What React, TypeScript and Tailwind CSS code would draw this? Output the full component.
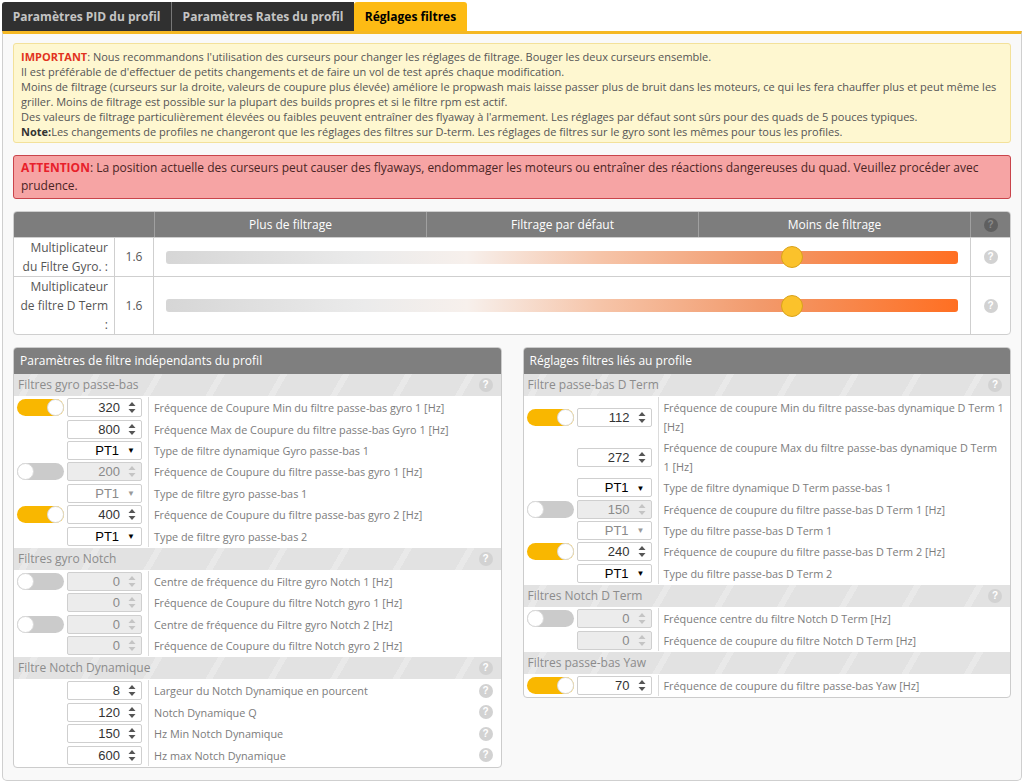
import React from 'react';

type Row = {
  toggle?: boolean;
  kind: 'num' | 'select';
  value: string;
  disabled?: boolean;
  label: string;
  help?: boolean;
};

type Group = { title: string; help?: boolean; rows: Row[] };

const leftGroups: Group[] = [
  {
    title: 'Filtres gyro passe-bas',
    help: true,
    rows: [
      { toggle: true, kind: 'num', value: '320', label: 'Fréquence de Coupure Min du filtre passe-bas gyro 1 [Hz]' },
      { kind: 'num', value: '800', label: 'Fréquence Max de Coupure du filtre passe-bas Gyro 1 [Hz]' },
      { kind: 'select', value: 'PT1', label: 'Type de filtre dynamique Gyro passe-bas 1' },
      { toggle: false, kind: 'num', value: '200', disabled: true, label: 'Fréquence de Coupure du filtre passe-bas gyro 1 [Hz]' },
      { kind: 'select', value: 'PT1', disabled: true, label: 'Type de filtre gyro passe-bas 1' },
      { toggle: true, kind: 'num', value: '400', label: 'Fréquence de Coupure du filtre passe-bas gyro 2 [Hz]' },
      { kind: 'select', value: 'PT1', label: 'Type de filtre gyro passe-bas 2' },
    ],
  },
  {
    title: 'Filtres gyro Notch',
    help: true,
    rows: [
      { toggle: false, kind: 'num', value: '0', disabled: true, label: 'Centre de fréquence du Filtre gyro Notch 1 [Hz]' },
      { kind: 'num', value: '0', disabled: true, label: 'Fréquence de Coupure du filtre Notch gyro 1 [Hz]' },
      { toggle: false, kind: 'num', value: '0', disabled: true, label: 'Centre de fréquence du Filtre gyro Notch 2 [Hz]' },
      { kind: 'num', value: '0', disabled: true, label: 'Fréquence de Coupure du filtre Notch gyro 2 [Hz]' },
    ],
  },
  {
    title: 'Filtre Notch Dynamique',
    help: true,
    rows: [
      { kind: 'num', value: '8', label: 'Largeur du Notch Dynamique en pourcent', help: true },
      { kind: 'num', value: '120', label: 'Notch Dynamique Q', help: true },
      { kind: 'num', value: '150', label: 'Hz Min Notch Dynamique', help: true },
      { kind: 'num', value: '600', label: 'Hz max Notch Dynamique', help: true },
    ],
  },
];

const rightGroups: Group[] = [
  {
    title: 'Filtre passe-bas D Term',
    help: true,
    rows: [
      { toggle: true, kind: 'num', value: '112', label: 'Fréquence de coupure Min du filtre passe-bas dynamique D Term 1 [Hz]' },
      { kind: 'num', value: '272', label: 'Fréquence de coupure Max du filtre passe-bas dynamique D Term 1 [Hz]' },
      { kind: 'select', value: 'PT1', label: 'Type de filtre dynamique D Term passe-bas 1' },
      { toggle: false, kind: 'num', value: '150', disabled: true, label: 'Fréquence de coupure du filtre passe-bas D Term 1 [Hz]' },
      { kind: 'select', value: 'PT1', disabled: true, label: 'Type du filtre passe-bas D Term 1' },
      { toggle: true, kind: 'num', value: '240', label: 'Fréquence de coupure du filtre passe-bas D Term 2 [Hz]' },
      { kind: 'select', value: 'PT1', label: 'Type du filtre passe-bas D Term 2' },
    ],
  },
  {
    title: 'Filtres Notch D Term',
    help: true,
    rows: [
      { toggle: false, kind: 'num', value: '0', disabled: true, label: 'Fréquence centre du filtre Notch D Term [Hz]' },
      { kind: 'num', value: '0', disabled: true, label: 'Fréquence de coupure du filtre Notch D Term [Hz]' },
    ],
  },
  {
    title: 'Filtres passe-bas Yaw',
    rows: [{ toggle: true, kind: 'num', value: '70', label: 'Fréquence de coupure du filtre passe-bas Yaw [Hz]' }],
  },
];

function Help({ dark }: { dark?: boolean }) {
  return (
    <span
      className={`flex h-[14px] w-[14px] shrink-0 items-center justify-center rounded-full font-['Liberation_Sans'] text-[10px] font-bold leading-none ${
        dark ? 'bg-[#5f5f5f] text-[#8a8a8a]' : 'bg-[#d2d2d2] text-white'
      }`}
    >
      ?
    </span>
  );
}

function Toggle({ on }: { on: boolean }) {
  return (
    <div
      className={`flex h-[17px] w-[47px] rounded-full ${
        on ? 'justify-end bg-[#f9b700]' : 'justify-start bg-[#cbcbcb]'
      }`}
    >
      <span className="h-[17px] w-[17px] rounded-full border border-[#d8d8d8] bg-white" />
    </div>
  );
}

function Spin({ disabled }: { disabled?: boolean }) {
  const c = disabled ? '#c4c4c4' : '#555';
  return (
    <svg width="8" height="13" viewBox="0 0 8 13" className="ml-[8px] shrink-0">
      <path d="M4 1 L7.5 5 H0.5 Z" fill={c} />
      <path d="M4 12 L7.5 8 H0.5 Z" fill={c} />
    </svg>
  );
}

function Field({ row }: { row: Row }) {
  const text = row.disabled ? 'text-[#8a8a8a]' : row.kind === 'select' ? 'text-black' : 'text-[#333]';
  return (
    <div
      className={`flex h-[19px] w-[75px] items-center justify-end rounded-[2px] border border-[#cfcfcf] pr-[5px] ${
        row.disabled && row.kind === 'num' ? 'bg-[#ececec]' : 'bg-white'
      }`}
    >
      <span className={`font-['Liberation_Sans'] text-[13px] leading-none ${text}`}>{row.value}</span>
      {row.kind === 'num' ? (
        <Spin disabled={row.disabled} />
      ) : (
        <span className={`ml-[8px] mr-[1px] text-[8px] leading-none ${row.disabled ? 'text-[#999]' : 'text-black'}`}>▼</span>
      )}
    </div>
  );
}

function Panel({ title, groups }: { title: string; groups: Group[] }) {
  return (
    <div className="overflow-hidden rounded-[4px] border border-[#cccccc] bg-white">
      <div className="flex h-[26px] items-center bg-[#7f7f7f] pl-[6px] text-[12px] text-white">{title}</div>
      {groups.map((g) => (
        <div key={g.title}>
          <div className="flex h-[22px] items-center justify-between bg-[#e3e3e3] bg-[repeating-linear-gradient(-60deg,#e2e2e2_0px,#e2e2e2_34px,#e9e9e9_34px,#e9e9e9_40px,#e2e2e2_40px,#e2e2e2_54px)] pl-[4px] pr-[8px] text-[12px] text-[#8c8c8c]">
            <span>{g.title}</span>
            {g.help && <Help />}
          </div>
          <div className="py-px">
            {g.rows.map((r, i) => (
              <div key={i} className="flex min-h-[21.4px]">
                <div className="flex w-[135px] shrink-0 items-center justify-end gap-[3px] border-r border-[#dcdcdc] pr-[6px]">
                  {r.toggle !== undefined && <Toggle on={r.toggle} />}
                  <Field row={r} />
                </div>
                <div className={`flex flex-1 items-center pl-[5px] ${r.help ? 'pr-[8px]' : 'pr-[5px]'}`}>
                  <span className="flex-1 py-px text-[10.85px] leading-[19px] text-[#7c7c7c]">{r.label}</span>
                  {r.help && <Help />}
                </div>
              </div>
            ))}
          </div>
        </div>
      ))}
    </div>
  );
}

function SliderRow({ label, value }: { label: React.ReactNode; value: string }) {
  return (
    <div className="flex border-t border-[#cfcfcf]">
      <div className="flex w-[101px] shrink-0 items-center justify-end border-r border-[#cfcfcf] pr-[6px] text-right text-[12px] leading-[19px] text-[#555]">
        {label}
      </div>
      <div className="flex w-[39px] shrink-0 items-center justify-center border-r border-[#cfcfcf] text-[12px] text-[#555]">
        {value}
      </div>
      <div className="flex flex-1 items-center px-[12px]">
        <div className="relative h-[13px] flex-1 rounded-[3px] bg-[linear-gradient(to_right,#d6d6d6_0%,#ebebeb_25%,#f7f0ec_38%,#f6c4a8_55%,#f29a6c_75%,#ff6f22_100%)]">
          <span className="absolute top-1/2 left-[79.1%] h-[22px] w-[22px] -translate-x-1/2 -translate-y-1/2 rounded-full border border-[#d9a21a] bg-[#fbc22b]" />
        </div>
      </div>
      <div className="flex w-[40px] shrink-0 items-center justify-center border-l border-[#cfcfcf]">
        <Help />
      </div>
    </div>
  );
}

export default function App() {
  return (
    <div className="h-[784px] w-[1024px] overflow-hidden bg-white font-['Open_Sans',sans-serif]">
      <div className="flex pt-[2px] pl-[2px]">
        <div className="flex h-[29px] w-[170px] items-center justify-center rounded-tl-[3px] border-r border-[#777] bg-[#303030] text-[12px] font-bold text-[#c4c4c4]">
          Paramètres PID du profil
        </div>
        <div className="flex h-[29px] w-[182px] items-center justify-center bg-[#303030] text-[12px] font-bold text-[#c4c4c4]">
          Paramètres Rates du profil
        </div>
        <div className="flex h-[29px] w-[113px] items-center justify-center rounded-t-[3px] bg-[#fdbb14] text-[12px] font-bold text-black">
          Réglages filtres
        </div>
      </div>
      <div className="mx-[2px] h-[750px] rounded-b-[5px] border-x border-b border-t-[3px] border-x-[#cfcfcf] border-b-[#cfcfcf] border-t-[#f5b823] bg-[#f9f9f9] px-[10px] pt-[9px]">
        <div className="rounded-[3px] border border-[#f3e19a] bg-[#fef7d0] px-[7px] pt-[5px] pb-[3px] text-[11px] leading-[15px] text-[#555]">
          <div>
            <span className="font-bold text-[#e2331e]">IMPORTANT</span>: Nous recommandons l'utilisation des curseurs pour changer les réglages de filtrage. Bouger les deux curseurs ensemble.
          </div>
          <div>Il est préférable de d'effectuer de petits changements et de faire un vol de test aprés chaque modification.</div>
          <div>
            Moins de filtrage (curseurs sur la droite, valeurs de coupure plus élevée) améliore le propwash mais laisse passer plus de bruit dans les moteurs, ce qui les fera chauffer plus et peut même les griller. Moins de filtrage est possible sur la plupart des builds propres et si le filtre rpm est actif.
          </div>
          <div>Des valeurs de filtrage particulièrement élevées ou faibles peuvent entraîner des flyaway à l'armement. Les réglages par défaut sont sûrs pour des quads de 5 pouces typiques.</div>
          <div>
            <span className="font-bold text-[#333]">Note:</span>Les changements de profiles ne changeront que les réglages des filtres sur D-term. Les réglages de filtres sur le gyro sont les mêmes pour tous les profiles.
          </div>
        </div>

        <div className="mt-[12px] rounded-[3px] border border-[#c9444b] bg-[#f6a4a4] px-[7px] py-[3px] text-[12px] leading-[18px] text-[#4a2424]">
          <span className="font-bold text-[#e8202a]">ATTENTION</span>: La position actuelle des curseurs peut causer des flyaways, endommager les moteurs ou entraîner des réactions dangereuses du quad. Veuillez procéder avec prudence.
        </div>

        <div className="mt-[12px] overflow-hidden rounded-[4px] border border-[#cfcfcf] bg-white">
          <div className="flex h-[25px] bg-[#7d7d7d] text-[12px] text-white">
            <div className="w-[141px] shrink-0 border-r border-[#a0a0a0]" />
            <div className="flex flex-1 items-center justify-center border-r border-[#a0a0a0]">Plus de filtrage</div>
            <div className="flex flex-1 items-center justify-center border-r border-[#a0a0a0]">Filtrage par défaut</div>
            <div className="flex flex-1 items-center justify-center">Moins de filtrage</div>
            <div className="flex w-[40px] shrink-0 items-center justify-center border-l border-[#a0a0a0]">
              <Help dark />
            </div>
          </div>
          <SliderRow
            value="1.6"
            label={
              <span>
                Multiplicateur
                <br />
                du Filtre Gyro. :
              </span>
            }
          />
          <SliderRow
            value="1.6"
            label={
              <span>
                Multiplicateur
                <br />
                de filtre D Term
                <br />:
              </span>
            }
          />
        </div>

        <div className="mt-[12px] grid grid-cols-2 items-start gap-[21px]">
          <Panel title="Paramètres de filtre indépendants du profil" groups={leftGroups} />
          <Panel title="Réglages filtres liés au profile" groups={rightGroups} />
        </div>
      </div>
    </div>
  );
}
